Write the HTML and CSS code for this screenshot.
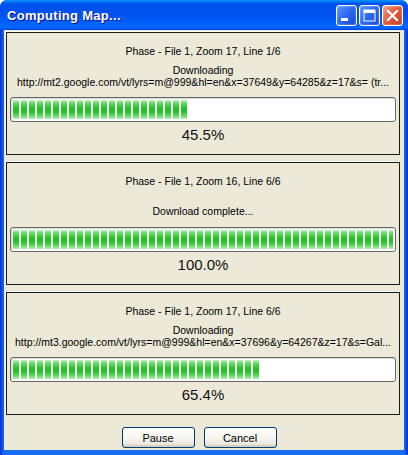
FILE: index.html
```html
<!DOCTYPE html>
<html lang="en">
<head>
<meta charset="UTF-8">
<title>Computing Map...</title>
<link rel="stylesheet" href="styles.css">
</head>
<body>

<div class="window">

<div class="titlebar">
<div class="title">Computing Map...</div>
<div class="title-buttons">
<div class="tbtn">
<svg width="21" height="21" viewBox="0 0 21 21"><rect x="5" y="13" width="7" height="3" fill="#fff"/></svg>
</div>
<div class="tbtn">
<svg width="21" height="21" viewBox="0 0 21 21"><rect x="5" y="5" width="11" height="11" fill="none" stroke="#fff" stroke-width="1"/><rect x="5" y="5" width="11" height="3" fill="#fff"/></svg>
</div>
<div class="tbtn close">
<svg width="21" height="21" viewBox="0 0 21 21"><path d="M6 6 L15 15 M15 6 L6 15" stroke="#fff" stroke-width="2.2" stroke-linecap="square"/></svg>
</div>
</div>
</div>

<div class="client">

<div class="panel">
<div class="phase">Phase - File 1, Zoom 17, Line 1/6</div>
<div class="status">
<div>Downloading</div>
<div>http://mt2.google.com/vt/lyrs=m@999&amp;hl=en&amp;x=37649&amp;y=64285&amp;z=17&amp;s= (tr...</div>
</div>
<div class="bar"><div class="fill" style="width:46%"></div></div>
<div class="pct">45.5%</div>
</div>

<div class="panel">
<div class="phase">Phase - File 1, Zoom 16, Line 6/6</div>
<div class="status single">
<div>Download complete...</div>
</div>
<div class="bar"><div class="fill" style="width:100%"></div></div>
<div class="pct">100.0%</div>
</div>

<div class="panel">
<div class="phase">Phase - File 1, Zoom 17, Line 6/6</div>
<div class="status">
<div>Downloading</div>
<div>http://mt3.google.com/vt/lyrs=m@999&amp;hl=en&amp;x=37696&amp;y=64267&amp;z=17&amp;s=Gal...</div>
</div>
<div class="bar"><div class="fill" style="width:65%"></div></div>
<div class="pct">65.4%</div>
</div>

<div class="actions">
<button>Pause</button>
<button>Cancel</button>
</div>

</div>
</div>

</body>
</html>
```

FILE: styles.css
```css
/* ---------- GLOBAL ---------- */
*{margin:0;padding:0;box-sizing:border-box;}
body{font-family:'Liberation Sans',Arial,sans-serif;font-size:10.5px;color:#000;background:#fff;}

/* ---------- WINDOW ---------- */
.window{
width:408px;
height:455px;
display:flex;
flex-direction:column;
background:linear-gradient(90deg,#0831d9,#166aee 4px,#166aee 404px,#0831d9);
border-radius:7px 7px 0 0;
overflow:hidden;
}

/* ---------- TITLE BAR ---------- */
.titlebar{
height:30px;
display:flex;
justify-content:space-between;
align-items:center;
padding:0 5px 0 7px;
background:linear-gradient(#0997ff 0%,#0053ee 12%,#0050ee 45%,#0066ff 85%,#0066ff 92%,#005bff 95%,#003dd7 100%);
}
.title{
font-family:'Liberation Sans',Arial,sans-serif;
font-weight:bold;
font-size:13px;
color:#fff;
text-shadow:1px 1px 0 #0f1089;
letter-spacing:0.3px;
}
.title-buttons{display:flex;gap:2px;}
.tbtn{
width:21px;
height:21px;
border:1px solid #fff;
border-radius:3px;
background:linear-gradient(135deg,#5a95ff,#2a67f0 50%,#1848d8);
box-shadow:inset 0 0 2px rgba(255,255,255,0.5);
}
.tbtn svg{display:block;margin:-1px;}
.tbtn.close{background:linear-gradient(135deg,#f2a089,#e3593a 50%,#c4401f);}

/* ---------- CLIENT ---------- */
.client{
flex:1;
margin:0 4px 5px 4px;
background:#ece9d8;
padding:2px 4px 0 2px;
display:flex;
flex-direction:column;
gap:7px;
}

/* ---------- PANEL ---------- */
.panel{
height:123px;
border:1px solid #1a1a1a;
box-shadow:-1px -1px 0 #fff;
text-align:center;
}
.phase{padding-top:12px;line-height:13px;}
.status{
height:36px;
display:flex;
flex-direction:column;
justify-content:center;
line-height:12px;
white-space:nowrap;
}
.status.single{padding-top:9px;}
.bar{
margin:3px 3px 0 3px;
height:25px;
border:1px solid #686868;
border-radius:3px;
background:#fff;
padding:2px 2px;
box-shadow:inset 1px 1px 0 #d8d8d8;
}
.fill{
height:100%;
background:
repeating-linear-gradient(90deg,transparent 0 6px,#fff 6px 8px),
linear-gradient(#c3f1c3 0%,#5ed95e 18%,#22c322 45%,#22c322 60%,#5ed95e 82%,#b8eeb8 100%);
}
.pct{margin-top:4px;font-size:15px;line-height:18px;color:#111;}

/* ---------- BUTTONS ---------- */
.actions{
display:flex;
justify-content:center;
gap:9px;
margin-top:5px;
padding-right:8px;
}
.actions button{
width:73px;
height:21px;
font-family:'Liberation Sans',Arial,sans-serif;
font-size:11px;
border:1px solid #003c74;
border-radius:3px;
background:linear-gradient(#ffffff,#f3f2ec 60%,#e4e1d4);
box-shadow:inset 0 -2px 0 #d6d0c0;
}
```
